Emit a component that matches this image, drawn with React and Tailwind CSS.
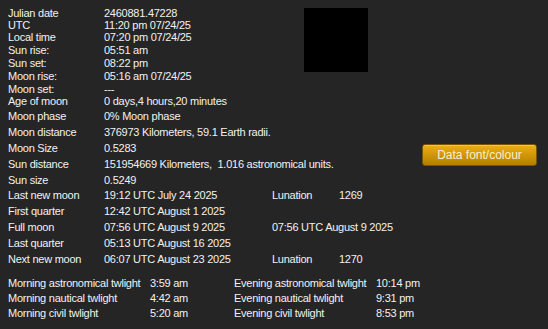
const font = { fontFamily: '"Liberation Sans", Arial, sans-serif' };

const topRows = [
  { label: 'Julian date', value: '2460881.47228', h: 'h-[12px]' },
  { label: 'UTC', value: '11:20 pm 07/24/25', h: 'h-[12px]' },
  { label: 'Local time', value: '07:20 pm 07/24/25', h: 'h-[12px]' },
  { label: 'Sun rise:', value: '05:51 am', h: 'h-[14px]' },
  { label: 'Sun set:', value: '08:22 pm', h: 'h-[13px]' },
  { label: 'Moon rise:', value: '05:16 am 07/24/25', h: 'h-[13px]' },
  { label: 'Moon set:', value: '---', h: 'h-[12px]' },
  { label: 'Age of moon', value: '0 days,4 hours,20 minutes', h: 'h-[12px]' },
];

const midRows = [
  { label: 'Moon phase', value: '0% Moon phase' },
  { label: 'Moon distance', value: '376973 Kilometers, 59.1 Earth radii.' },
  { label: 'Moon Size', value: '0.5283' },
  { label: 'Sun distance', value: '151954669 Kilometers,\u00a0 1.016 astronomical units.' },
  { label: 'Sun size', value: '0.5249' },
  { label: 'Last new moon', value: '19:12 UTC July 24 2025', extra: 'Lunation', extraValue: '1269' },
  { label: 'First quarter', value: '12:42 UTC August 1 2025' },
  { label: 'Full moon', value: '07:56 UTC August 9 2025', extra: '07:56 UTC August 9 2025' },
  { label: 'Last quarter', value: '05:13 UTC August 16 2025' },
  { label: 'Next new moon', value: '06:07 UTC August 23 2025', extra: 'Lunation', extraValue: '1270' },
];

const twilight = [
  ['Morning astronomical twlight', '3:59 am', 'Evening astronomical twlight', '10:14 pm'],
  ['Morning nautical twlight', '4:42 am', 'Evening nautical twlight', '9:31 pm'],
  ['Morning civil twlight', '5:20 am', 'Evening civil twlight', '8:53 pm'],
];

export default function App() {
  return (
    <div className="w-[548px] h-[329px] bg-[#252525] text-[#f2f2f2] text-[11px] tracking-[-0.25px] leading-none overflow-hidden flex" style={font}>
      <div className="w-[300px] shrink-0">
        <div className="pt-[7px]">
          {topRows.map((r) => (
            <div key={r.label} className={`flex items-center pl-[8px] ${r.h}`}>
              <span className="w-[96px]">{r.label}</span>
              <span className="whitespace-nowrap">{r.value}</span>
            </div>
          ))}
        </div>
        <div className="pt-[2px]">
          {midRows.map((r) => (
            <div key={r.label} className="flex items-center pl-[8px] h-[15.8px] w-[548px] whitespace-nowrap">
              <span className="w-[96px] shrink-0">{r.label}</span>
              <span className="w-[168px] shrink-0">{r.value}</span>
              {r.extra && <span className="w-[67px] shrink-0">{r.extra}</span>}
              {r.extraValue && <span>{r.extraValue}</span>}
            </div>
          ))}
        </div>
        <div className="pt-[9px]">
          {twilight.map((t) => (
            <div key={t[0]} className="flex items-center pl-[8px] h-[15.2px] w-[548px] whitespace-nowrap">
              <span className="w-[142px] shrink-0">{t[0]}</span>
              <span className="w-[84px] shrink-0">{t[1]}</span>
              <span className="w-[142px] shrink-0">{t[2]}</span>
              <span>{t[3]}</span>
            </div>
          ))}
        </div>
      </div>
      <div className="flex-1 flex flex-col">
        <div className="ml-[4px] mt-[8px] w-[64px] h-[64px] bg-black" />
        <button className="ml-[122px] mt-[72px] w-[115px] h-[22px] rounded-[3px] border border-[#7a5500] bg-gradient-to-b from-[#eeae14] to-[#b47e00] text-[#f7f0d0] text-[12px] tracking-normal shadow-[inset_0_1px_0_rgba(255,220,120,0.5)]" style={font}>
          Data font/colour
        </button>
      </div>
    </div>
  );
}
